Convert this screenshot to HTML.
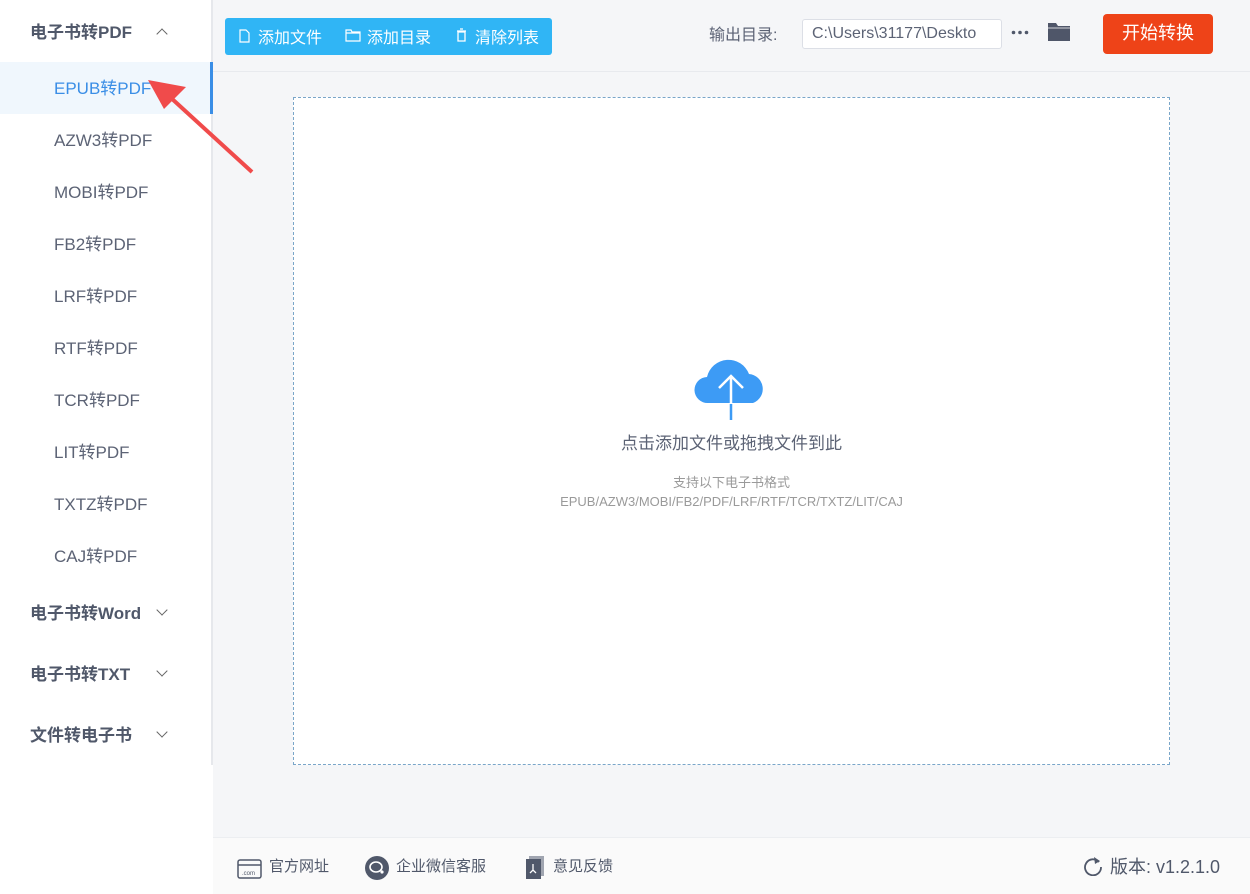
<!DOCTYPE html><html><head><meta charset="utf-8"><style>
*{margin:0;padding:0;box-sizing:border-box}
body{width:1250px;height:894px;position:relative;overflow:hidden;background:#f5f6f8;font-family:"Liberation Sans","Noto Sans CJK SC",sans-serif;color:#555b6b}
.side{position:absolute;left:0;top:0;width:213px;height:894px;background:#fff}
.side .bd{position:absolute;left:211px;top:0;width:2px;height:765px;background:#e6e8ec}
.grp{position:absolute;left:30px;font-size:17px;font-weight:bold;color:#50586a}
.chev{position:absolute;left:158px;width:8px;height:8px;border-left:1.5px solid #666;border-top:1.5px solid #666}
.it{position:absolute;left:54px;font-size:17px;color:#5c6375}
.act{position:absolute;left:0;top:62px;width:213px;height:52px;background:#f0f7fd;border-right:3px solid #3a8ee6}
.top{position:absolute;left:213px;top:0;width:1037px;height:72px;border-bottom:1px solid #e8eaee;background:#f5f6f8}
.btns{position:absolute;left:225px;top:18px;width:327px;height:37px;background:#30b5f5;border-radius:3px;color:#fff;font-size:16px}
.btns span{position:absolute;top:6px}
.drop{position:absolute;left:293px;top:97px;width:877px;height:668px;background:#fff;border:1px dashed #7aa6c9}
.foot{position:absolute;left:213px;top:837px;width:1037px;height:57px;background:#fafafa;border-top:1px solid #eceef1;font-size:15px;color:#50586a}
</style></head><body>
<div class="side"><div class="bd"></div>
<div class="act"></div>
<div class="grp" style="top:18px">电子书转PDF</div><div class="chev" style="top:30px;transform:rotate(45deg)"></div>
<div class="it" style="top:74px;color:#3a8ee6">EPUB转PDF</div>
<div class="it" style="top:126px">AZW3转PDF</div>
<div class="it" style="top:178px">MOBI转PDF</div>
<div class="it" style="top:230px">FB2转PDF</div>
<div class="it" style="top:282px">LRF转PDF</div>
<div class="it" style="top:334px">RTF转PDF</div>
<div class="it" style="top:386px">TCR转PDF</div>
<div class="it" style="top:438px">LIT转PDF</div>
<div class="it" style="top:490px">TXTZ转PDF</div>
<div class="it" style="top:542px">CAJ转PDF</div>
<div class="grp" style="top:599px">电子书转Word</div><div class="chev" style="top:606px;transform:rotate(225deg)"></div>
<div class="grp" style="top:660px">电子书转TXT</div><div class="chev" style="top:667px;transform:rotate(225deg)"></div>
<div class="grp" style="top:721px">文件转电子书</div><div class="chev" style="top:728px;transform:rotate(225deg)"></div>
</div>
<div class="top"></div>
<div class="btns">
<svg style="position:absolute;left:14px;top:11px" width="11" height="14"><path d="M1 1h6l3 3v9H1z" fill="none" stroke="#fff" stroke-width="1.2"/></svg><span style="left:33px">添加文件</span>
<svg style="position:absolute;left:120px;top:11px" width="16" height="13"><path d="M1 1h5l1 2h8v9H1z M1 4h14" fill="none" stroke="#fff" stroke-width="1.2"/></svg><span style="left:142px">添加目录</span>
<svg style="position:absolute;left:231px;top:10px" width="11" height="14"><path d="M1 3h9M4 1h3M2 4h7v9H2z" fill="none" stroke="#fff" stroke-width="1.3"/></svg><span style="left:250px">清除列表</span>
</div>
<div style="position:absolute;left:709px;top:21px;font-size:16px;color:#5c6375">输出目录:</div>
<div style="position:absolute;left:802px;top:19px;width:200px;height:30px;background:#fff;border:1px solid #dcdfe6;border-radius:3px;font-size:16px;padding:5px 9px;color:#5c6375;overflow:hidden;white-space:nowrap">C:\Users\31177\Deskto</div>
<svg style="position:absolute;left:1011px;top:30px" width="18" height="5"><circle cx="2.5" cy="2.5" r="1.8" fill="#50586a"/><circle cx="9" cy="2.5" r="1.8" fill="#50586a"/><circle cx="15.5" cy="2.5" r="1.8" fill="#50586a"/></svg>
<svg style="position:absolute;left:1047px;top:21px" width="25" height="22"><path d="M1 2h8l2 3h12v15H1z" fill="#4f5669"/><path d="M1 7h22" stroke="#fff" stroke-width="0.8"/></svg>
<div style="position:absolute;left:1103px;top:14px;width:110px;height:40px;background:#ee4318;border-radius:4px;color:#fff;font-size:18px;text-align:center;line-height:38px">开始转换</div>
<div class="drop"></div>
<svg style="position:absolute;left:694px;top:356px" width="75" height="64"><path d="M14 47a13 13 0 0 1 -1 -26a22 22 0 0 1 42 -3a15 15 0 0 1 4 29z" fill="#3d9bf5"/><path d="M37 64V20M25 32l12-12 12 12" fill="none" stroke="#fff" stroke-width="2.5"/><path d="M37 48V64" stroke="#3d9bf5" stroke-width="2.5"/></svg>
<div style="position:absolute;left:0;width:1463px;top:429px;text-align:center;font-size:17px;color:#5c6375">点击添加文件或拖拽文件到此</div>
<div style="position:absolute;left:0;width:1463px;top:473px;text-align:center;font-size:13px;color:#9a9a9a;line-height:19px">支持以下电子书格式<br>EPUB/AZW3/MOBI/FB2/PDF/LRF/RTF/TCR/TXTZ/LIT/CAJ</div>
<div class="foot">
<svg style="position:absolute;left:24px;top:21px" width="25" height="20"><rect x="1" y="1" width="23" height="18" rx="2" fill="none" stroke="#50586a" stroke-width="1.5"/><path d="M1 6h23" stroke="#50586a" stroke-width="1.5"/><text x="5" y="16" font-size="6" fill="#50586a" font-family="Liberation Sans">.com</text></svg>
<span style="position:absolute;left:56px;top:17px">官方网址</span>
<svg style="position:absolute;left:151px;top:17px" width="26" height="26"><circle cx="13" cy="13" r="12" fill="#50586a"/><ellipse cx="12" cy="12" rx="6" ry="5" fill="none" stroke="#fff" stroke-width="1.6"/><circle cx="18" cy="17" r="1.6" fill="#fff"/></svg>
<span style="position:absolute;left:183px;top:17px">企业微信客服</span>
<svg style="position:absolute;left:312px;top:18px" width="20" height="24"><rect x="4" y="0" width="15" height="20" fill="#a0a5b0"/><rect x="1" y="3" width="15" height="20" fill="#50586a"/><path d="M8 8v6M5 17l3-3 3 3" fill="none" stroke="#fff" stroke-width="1.3"/></svg>
<span style="position:absolute;left:340px;top:17px">意见反馈</span>
<svg style="position:absolute;left:870px;top:18px" width="20" height="20"><path d="M16 6A8 8 0 1 0 18 11" fill="none" stroke="#50586a" stroke-width="1.8"/><path d="M11 1l6 4-5 3z" fill="#50586a"/></svg>
<span style="position:absolute;left:897px;top:15px;font-size:18px">版本: v1.2.1.0</span>
</div>
<svg style="position:absolute;left:140px;top:75px" width="120" height="100"><path d="M112 97L30 22" stroke="#f04b4b" stroke-width="4"/><path d="M8 5l38 7-22 22z" fill="#f04b4b"/></svg>
</body></html>
